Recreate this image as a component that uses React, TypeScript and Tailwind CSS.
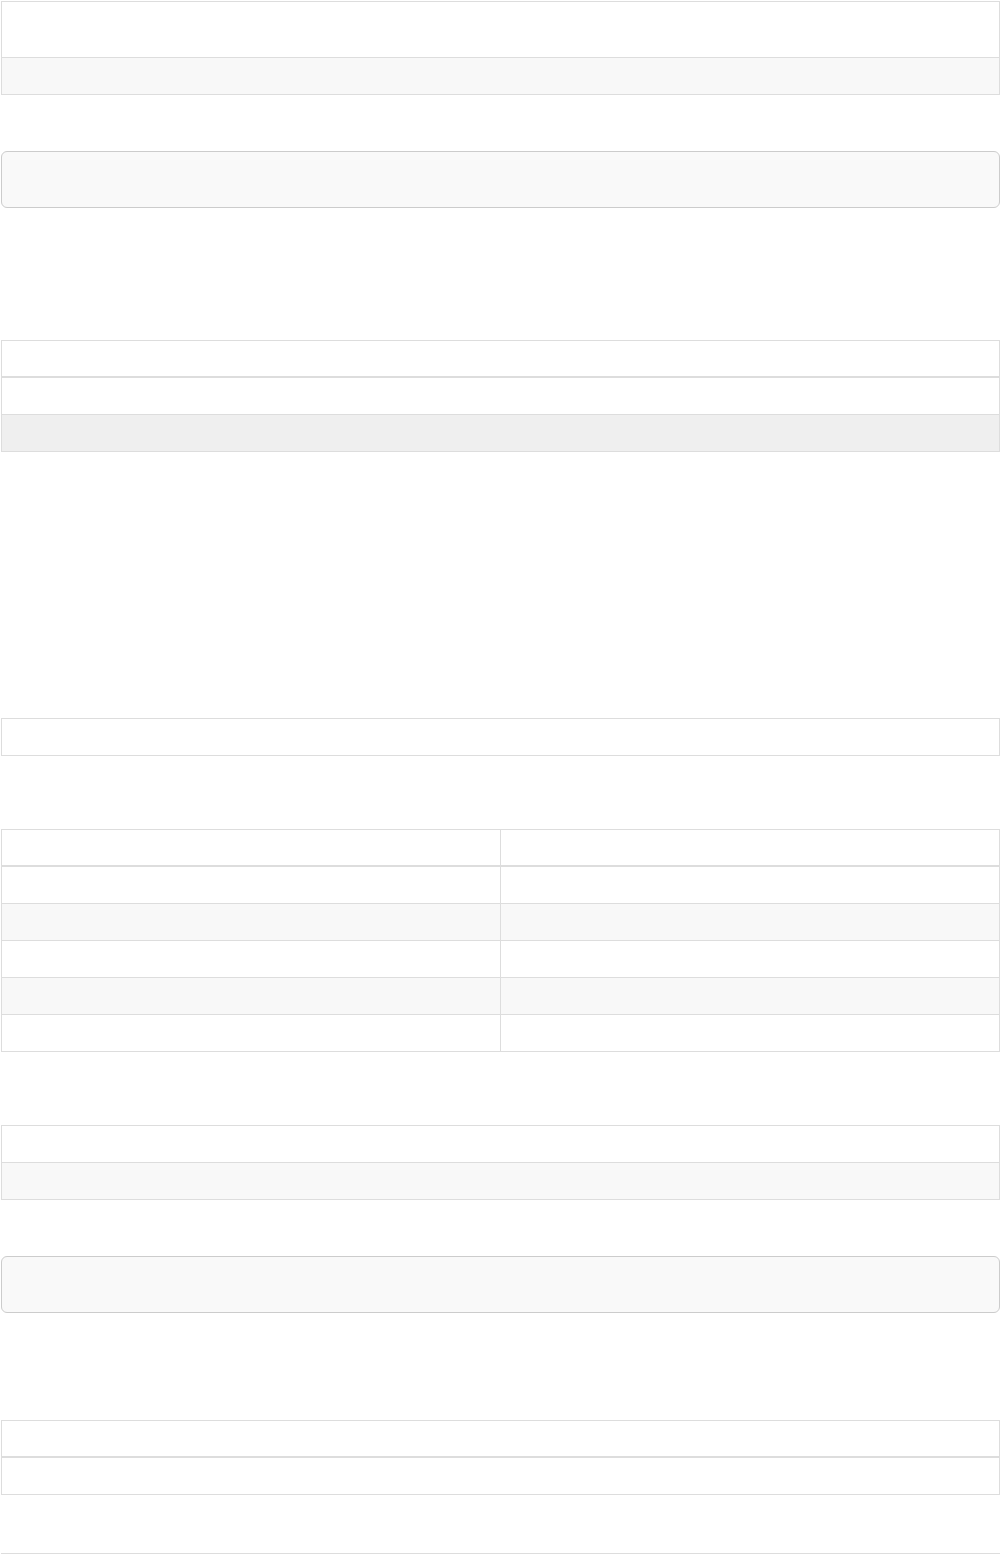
function Table({ rows, header = false, cols = 1 }: { rows: string[]; header?: boolean; cols?: number }) {
  return (
    <div className="border border-[#dddddd]">
      {rows.map((bg, i) => {
        const divider =
          i === 0 ? "h-[35px] " : i === 1 && header ? "h-[38px] border-t-2 border-[#dddddd] " : "h-[37px] border-t border-[#dddddd] ";
        const first = i === 0 && !header ? "h-[36px] " : "";
        return (
          <div key={i} className={(first || divider) + (cols === 2 ? "grid grid-cols-2 " : "flex ") + bg}>
            {cols === 2 ? (
              <>
                <div className="border-r border-[#dddddd]" />
                <div />
              </>
            ) : null}
          </div>
        );
      })}
    </div>
  );
}

function CodeBlock() {
  return <div className="h-[57px] rounded-[6px] border border-[#cccccc] bg-[#f9f9f9]" />;
}

export default function App() {
  return (
    <div className="min-h-[1554px] bg-white pl-px pt-px font-['Liberation_Sans',sans-serif]">
      {/* first table: tall top row */}
      <div className="border border-[#dddddd]">
        <div className="h-[55px]" />
        <div className="h-[37px] border-t border-[#dddddd] bg-[#f8f8f8]" />
      </div>

      <div className="mt-[56px]">
        <CodeBlock />
      </div>

      <div className="mt-[132px]">
        <Table header rows={["", "", "bg-[#efefef]"]} />
      </div>

      <div className="mt-[266px]">
        <Table rows={[""]} />
      </div>

      <div className="mt-[73px]">
        <Table header cols={2} rows={["", "", "bg-[#f8f8f8]", "", "bg-[#f8f8f8]", ""]} />
      </div>

      <div className="mt-[73px]">
        <Table rows={["", "bg-[#f8f8f8]"]} />
      </div>

      <div className="mt-[56px]">
        <CodeBlock />
      </div>

      <div className="mt-[107px]">
        <Table header rows={["", ""]} />
      </div>

      <div className="mt-[58px] border-t border-[#dddddd]" />
    </div>
  );
}
